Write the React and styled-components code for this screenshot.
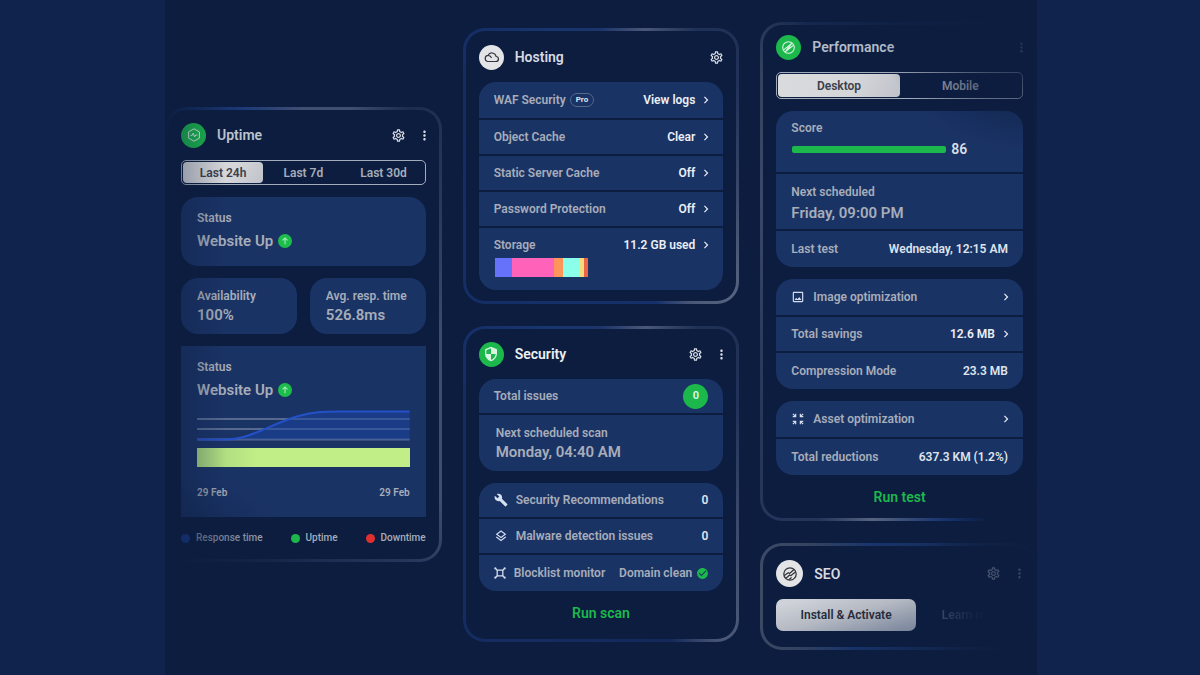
import React from "react";
import styled, { createGlobalStyle } from "styled-components";
import {
  MdBuild,
  MdCheckCircle,
  MdChevronRight,
  MdMoreVert,
  MdOutlineImage,
  MdOutlineLayers,
  MdOutlineSettings,
  MdOutlineZoomInMap,
  MdSecurity,
} from "react-icons/md";

const GlobalStyle = createGlobalStyle`
  * {
    box-sizing: border-box;
  }
  body {
    margin: 0;
    background: #10234c;
    color: #a7adb9;
    font-family: Roboto, "Liberation Sans", sans-serif;
    font-size: 12px;
    font-weight: 600;
    line-height: 14px;
  }
  button {
    padding: 0;
    border: 0;
    background: none;
    color: inherit;
    font: inherit;
    cursor: pointer;
  }
`;

const Stage = styled.main`
  display: grid;
  grid-template-columns: repeat(3, minmax(0, 1fr));
  gap: 21px;
  min-height: 100vh;
  margin: 0 163px 0 165px;
  background: #0c1d40;
`;

const Column = styled.div`
  display: flex;
  flex-direction: column;
  gap: 22px;
  padding-top: ${p => p.$top};
`;

const Card = styled.section`
  position: relative;
  display: flex;
  flex-direction: column;
  gap: 12px;
  padding: ${p => p.$padding};
  border: 3px solid transparent;
  border-radius: 22px;
  background: linear-gradient(#0c1d40, #0c1d40) padding-box,
    ${p => p.$edge} border-box;

  &::after {
    content: "";
    position: absolute;
    inset: -3px;
    background: ${p => p.$fade || "none"};
    pointer-events: none;
  }
`;

const Header = styled.header`
  display: flex;
  align-items: center;
  gap: 11px;
  min-height: 26px;
`;

const Badge = styled.span`
  display: flex;
  align-items: center;
  justify-content: center;
  width: ${p => p.$size || "25px"};
  height: ${p => p.$size || "25px"};
  border-radius: 50%;
  background: ${p => (p.$light ? "#e3e4e6" : "#1cb84c")};
  color: ${p => (p.$light ? "#33363c" : "#d9f5e1")};
`;

const Title = styled.h2`
  flex: 1;
  margin: 0;
  color: ${p => p.$color || "#d5d9e0"};
  font-size: 14px;
  font-weight: 600;
  line-height: 18px;
`;

const Tools = styled.div`
  display: flex;
  gap: 11px;
  color: #d5dae3;
  font-size: 15px;
  margin-right: ${p => (p.$menu ? "-6px" : "-1px")};
`;

const IconButton = styled.button`
  display: flex;
`;

const Tabs = styled.div`
  display: flex;
  height: ${p => p.$height};
  padding: 1px;
  border: 1px solid #a3acbc;
  border-radius: 5px;
`;

const Tab = styled.button`
  flex: 1;
  border-radius: 4px;
  background: ${p =>
    p.$active ? "linear-gradient(120deg, #dadbdd, #d5d6d9 60%, #bfc2ca)" : "none"};
  color: ${p => (p.$active ? "#3c404a" : "#a7adb9")};
`;

const Group = styled.div`
  display: flex;
  flex-direction: column;
  gap: 2px;
  overflow: hidden;
  border-radius: ${p => (p.$square ? "0" : "17px")};
`;

const Row = styled.div`
  display: flex;
  align-items: center;
  gap: 8px;
  min-height: ${p => (p.$tall ? "36px" : "34px")};
  padding: 0 15px;
  background: #1a3365;

  > svg {
    color: #d5dfef;
    font-size: 14px;
  }
`;

const Block = styled.div`
  padding: ${p => p.$padding};
  background: #1a3365;
`;

const Grow = styled.span`
  display: flex;
  flex: 1;
  align-items: center;
  white-space: nowrap;
`;

const Pro = styled.span`
  margin-left: 4px;
  padding: 1px 5px;
  border: 1px solid #56688c;
  border-radius: 8px;
  color: #dfe5ef;
  font-size: 8px;
  font-weight: 700;
  line-height: 10px;
`;

const Value = styled.span`
  color: #dfe4ec;
`;

const LinkValue = styled.button`
  display: flex;
  align-items: center;
  gap: 4px;
  color: #eceff4;

  svg {
    margin-right: -5px;
    font-size: 14px;
  }
`;

const StorageLine = styled.div`
  display: flex;
  align-items: center;
  height: 18px;
`;

const StorageBar = styled.div`
  display: flex;
  width: 93px;
  height: 19px;
  margin-top: 4px;
  margin-left: 1px;
`;

const Segment = styled.span`
  flex: ${p => p.$share};
  background: ${p => p.$color};
`;

const Big = styled.div`
  display: flex;
  align-items: center;
  gap: 5px;
  margin-top: ${p => p.$gap || "3px"};
  font-size: 15px;
  line-height: 18px;
`;

const Count = styled.span`
  display: flex;
  align-items: center;
  justify-content: center;
  width: 25px;
  height: 25px;
  border-radius: 50%;
  background: #1cb84c;
  color: #e5f9eb;
  font-size: 11px;
`;

const Clean = styled.span`
  display: flex;
  align-items: center;
  gap: 4px;
  margin-right: -1px;

  svg {
    color: #1cb84c;
    font-size: 13px;
  }
`;

const RunButton = styled.button`
  align-self: center;
  color: #1cb84c;
  font-size: 14px;
  line-height: 20px;
`;

const Pair = styled.div`
  display: grid;
  grid-template-columns: 1fr 1fr;
  gap: 13px;
`;

const Chart = styled.svg`
  display: block;
  width: 100%;
  height: 36px;
  margin-top: 7px;
`;

const UptimeBar = styled.div`
  height: 19px;
  margin: 6px 0 19px;
  background: linear-gradient(90deg, #a3d07c, #c1ee86 28%);
`;

const Dates = styled.div`
  display: flex;
  justify-content: space-between;
  font-size: 10px;
`;

const Legend = styled.ul`
  display: flex;
  justify-content: space-between;
  margin: 2px 0 0;
  padding: 0;
  list-style: none;
  font-size: 10px;
  font-weight: 500;
`;

const LegendItem = styled.li`
  display: flex;
  align-items: center;
  gap: 6px;

  &::before {
    content: "";
    width: 9px;
    height: 9px;
    border-radius: 50%;
    background: ${p => p.$color};
  }
`;

const ScoreBar = styled.span`
  width: 71%;
  height: 7px;
  margin-left: 1px;
  border-radius: 2px;
  background: #1cb84c;
`;

const ScoreValue = styled.span`
  color: #d9dee7;
  font-size: 14px;
`;

const Actions = styled.div`
  display: flex;
  align-items: center;
  gap: 26px;
`;

const Install = styled.button`
  width: 57%;
  height: 32px;
  border-radius: 7px;
  background: linear-gradient(165deg, #cfd2d8 10%, #b3b8c2 50%, #77839a);
  color: #262c3a;
`;

const Learn = styled.a`
  background: linear-gradient(90deg, #43516c, #0c1d40 80%);
  background-clip: text;
  color: transparent;
  text-decoration: none;
`;

const segments = [
  { id: "files", share: 17, color: "#6772fb" },
  { id: "media", share: 42, color: "#ff62b9" },
  { id: "db", share: 9, color: "#ff955a" },
  { id: "backups", share: 17, color: "#8bffe9" },
  { id: "logs", share: 4, color: "#f3dc7c" },
  { id: "other", share: 4, color: "#ea6547" },
];

const hostingRows = [
  { label: "WAF Security", value: "View logs", pro: true },
  { label: "Object Cache", value: "Clear" },
  { label: "Static Server Cache", value: "Off" },
  { label: "Password Protection", value: "Off" },
];

const UptimeIcon = () => (
  <svg width="14" height="14" viewBox="0 0 14 14" fill="none" stroke="currentColor" strokeLinejoin="round">
    <path d="M7 .8l5.400 3.100v6.200L7 13.200l-5.400-3.100V3.900z" />
    <path d="M3.600 7.400h1.600l1-2.200 1.500 3.600 1-1.800h1.700" />
  </svg>
);

const CloudIcon = () => (
  <svg width="17" height="17" viewBox="0 0 17 17" fill="none" stroke="currentColor" strokeWidth="1.200" strokeLinecap="round">
    <path d="M4.600 12.500h8.200a2.500 2.500 0 0 0 .300-5A4.300 4.300 0 0 0 5 6.400a3.100 3.100 0 0 0-.400 6.100z" />
    <path d="M5 6.500c1.700 0 2.700.7 3.300 2" />
  </svg>
);

const BoltIcon = () => (
  <svg width="15" height="15" viewBox="0 0 15 15" fill="none" stroke="currentColor" strokeWidth="1.100" strokeLinecap="round">
    <circle cx="7.500" cy="7.500" r="5.800" />
    <path d="M3 9.600l7.700-6.200-3 4.200M4.300 11.800l7.500-6M4.300 11.800l3-4.200" strokeLinejoin="round" />
  </svg>
);

const SeoIcon = () => (
  <svg width="16" height="16" viewBox="0 0 16 16" fill="none" stroke="currentColor" strokeWidth="1.300" strokeLinecap="round">
    <circle cx="8" cy="8" r="6.200" />
    <path d="M2.600 9.300l3.600-2.600 1.300.8 4.300-3.700M4.200 12l3.200-2.800 1.300.5 4.700-3.600M7.200 13.500l2-1.700" strokeLinejoin="round" />
  </svg>
);

const FrameIcon = () => (
  <svg width="12" height="12" viewBox="0 0 12 12" fill="none" stroke="currentColor" strokeWidth="1.300">
    <path d="M3 3.200h6M3 8.800h6M3.200 3v6M8.800 3v6M1 1l2 2M11 1L9 3M1 11l2-2M11 11L9 9" />
    <path d="M.4 1.400h1.800M9.800 1.400h1.800M.4 10.600h1.800M9.800 10.600h1.800" strokeWidth="1.600" />
  </svg>
);

const UpIcon = () => (
  <svg width="14" height="14" viewBox="0 0 13 13" fill="none">
    <circle cx="6.500" cy="6.500" r="6.500" fill="#1dbd4b" />
    <path d="M6.500 9.500V4M4.200 6l2.300-2.300L8.800 6" stroke="#a8ecbc" />
  </svg>
);

const CardHeader = ({ icon, title, color, light, size, settings = true, menu = true }) => (
  <Header>
    <Badge $light={light} $size={size}>
      {icon}
    </Badge>
    <Title $color={color}>{title}</Title>
    <Tools $menu={menu}>
      {settings && (
        <IconButton aria-label="Settings">
          <MdOutlineSettings />
        </IconButton>
      )}
      {menu && (
        <IconButton aria-label="More">
          <MdMoreVert />
        </IconButton>
      )}
    </Tools>
  </Header>
);

const Uptime = () => (
  <Card
    $padding="12px 13px 14px"
    $edge="conic-gradient(#3f4f72 0deg, #3f4f72 12deg, #1a2c50 25deg, #26365a 40deg, #3d4c6c 90deg, #3f4e6e 140deg, #24365c 155deg, #14264a 190deg, #0c1d40 215deg, #0c1d40 325deg, #1c3a78 345deg, #3f4f72 360deg)"
    $fade="linear-gradient(90deg, rgba(12, 29, 64, 0.45), rgba(12, 29, 64, 0) 22%), radial-gradient(130px 90px at 0 100%, rgba(12, 29, 64, 0.65), rgba(12, 29, 64, 0))"
  >
    <CardHeader icon={<UptimeIcon />} title="Uptime" color="#bcc3cf" />
    <Tabs $height="25px">
      <Tab $active aria-pressed="true">Last 24h</Tab>
      <Tab aria-pressed="false">Last 7d</Tab>
      <Tab aria-pressed="false">Last 30d</Tab>
    </Tabs>
    <Group>
      <Block $padding="14px 16px 16px">
        Status
        <Big $gap="7px">
          Website Up <UpIcon />
        </Big>
      </Block>
    </Group>
    <Pair>
      <Group>
        <Block $padding="11px 16px 10px">
          Availability
          <Big>100%</Big>
        </Block>
      </Group>
      <Group>
        <Block $padding="11px 0 10px 16px">
          Avg. resp. time
          <Big>526.8ms</Big>
        </Block>
      </Group>
    </Pair>
    <Group $square>
      <Block $padding="14px 16px 17px">
        Status
        <Big $gap="7px">
          Website Up <UpIcon />
        </Big>
        <Chart viewBox="0 0 213 36" preserveAspectRatio="none" fill="none">
          <path d="M0 13h213M0 23h213M0 33.500h213" stroke="#56698f" strokeWidth="2" />
          <path d="M0 33.500h28c25 0 45-15 72-23 16-4.500 25-5 43-5h70v28z" fill="#1a46a8" fillOpacity="0.500" />
          <path d="M0 33.500h28c25 0 45-15 72-23 16-4.500 25-5 43-5h70" stroke="#2450c8" strokeWidth="2" />
        </Chart>
        <UptimeBar />
        <Dates>
          <span>29 Feb</span>
          <span>29 Feb</span>
        </Dates>
      </Block>
    </Group>
    <Legend>
      <LegendItem $color="#2045a8">Response time</LegendItem>
      <LegendItem $color="#1cb84c">Uptime</LegendItem>
      <LegendItem $color="#e02f2f">Downtime</LegendItem>
    </Legend>
  </Card>
);

const Hosting = () => (
  <Card
    $padding="13px 13px 11px"
    $edge="conic-gradient(#1c356a 0deg, #4a5878 18deg, #1e3156 35deg, #22325a 60deg, #38476a 100deg, #56637f 135deg, #4b5977 146deg, #15306a 158deg, #142c60 300deg, #17356f 340deg, #1c356a 360deg)"
  >
    <CardHeader icon={<CloudIcon />} title="Hosting" light menu={false} />
    <Group>
      {hostingRows.map((row, i) => (
        <Row key={row.label} $tall={i === 0}>
          <Grow>
            {row.label}
            {row.pro && <Pro>Pro</Pro>}
          </Grow>
          <LinkValue>
            {row.value} <MdChevronRight />
          </LinkValue>
        </Row>
      ))}
      <Block $padding="8px 15px 13px">
        <StorageLine>
          <Grow>Storage</Grow>
          <LinkValue>
            11.2 GB used <MdChevronRight />
          </LinkValue>
        </StorageLine>
        <StorageBar>
          {segments.map(segment => (
            <Segment key={segment.id} $share={segment.share} $color={segment.color} />
          ))}
        </StorageBar>
      </Block>
    </Group>
  </Card>
);

const Security = () => (
  <Card
    $padding="12px 13px 16px"
    $edge="conic-gradient(#1c356a 0deg, #4a5878 16deg, #1e3156 32deg, #22325a 60deg, #38476a 100deg, #4b5977 142deg, #14295a 156deg, #142c60 200deg, #142c60 300deg, #17356f 340deg, #1c356a 360deg)"
  >
    <CardHeader icon={<MdSecurity size={16} />} title="Security" color="#eef0f4" />
    <Group>
      <Row>
        <Grow>Total issues</Grow>
        <Count>0</Count>
      </Row>
      <Block $padding="11px 17px 10px">
        Next scheduled scan
        <Big>Monday, 04:40 AM</Big>
      </Block>
    </Group>
    <Group>
      <Row>
        <MdBuild />
        <Grow>Security Recommendations</Grow>
        <Value>0</Value>
      </Row>
      <Row>
        <MdOutlineLayers />
        <Grow>Malware detection issues</Grow>
        <Value>0</Value>
      </Row>
      <Row $tall>
        <FrameIcon />
        <Grow>Blocklist monitor</Grow>
        <Clean>
          Domain clean <MdCheckCircle />
        </Clean>
      </Row>
    </Group>
    <RunButton>Run scan</RunButton>
  </Card>
);

const Performance = () => (
  <Card
    $padding="9px 11px 11px 13px"
    $edge="conic-gradient(#0e2146 0deg, #0c1d40 160deg, #17356f 170deg, #566480 186deg, #22345a 198deg, #24365a 212deg, #2b3b5c 240deg, #3a4968 300deg, #33435f 325deg, #14284f 340deg, #0e2146 360deg)"
    $fade="radial-gradient(160px 130px at 100% 0, #0c1d40 5%, rgba(12, 29, 64, 0.7) 45%, rgba(12, 29, 64, 0))"
  >
    <CardHeader icon={<BoltIcon />} title="Performance" color="#b4bbc8" settings={false} />
    <Tabs $height="27px">
      <Tab $active aria-pressed="true">Desktop</Tab>
      <Tab aria-pressed="false">Mobile</Tab>
    </Tabs>
    <Group>
      <Block $padding="10px 15px 14px">
        Score
        <Big $gap="5px">
          <ScoreBar />
          <ScoreValue>86</ScoreValue>
        </Big>
      </Block>
      <Block $padding="11px 15px 7px">
        Next scheduled
        <Big $gap="5px">Friday, 09:00 PM</Big>
      </Block>
      <Row $tall>
        <Grow>Last test</Grow>
        <Value>Wednesday, 12:15 AM</Value>
      </Row>
    </Group>
    <Group>
      <Row $tall>
        <MdOutlineImage />
        <Grow>Image optimization</Grow>
        <LinkValue aria-label="Image optimization">
          <MdChevronRight />
        </LinkValue>
      </Row>
      <Row>
        <Grow>Total savings</Grow>
        <LinkValue>
          12.6 MB <MdChevronRight />
        </LinkValue>
      </Row>
      <Row $tall>
        <Grow>Compression Mode</Grow>
        <Value>23.3 MB</Value>
      </Row>
    </Group>
    <Group>
      <Row $tall>
        <MdOutlineZoomInMap />
        <Grow>Asset optimization</Grow>
        <LinkValue aria-label="Asset optimization">
          <MdChevronRight />
        </LinkValue>
      </Row>
      <Row $tall>
        <Grow>Total reductions</Grow>
        <Value>637.3 KM (1.2%)</Value>
      </Row>
    </Group>
    <RunButton>Run test</RunButton>
  </Card>
);

const Seo = () => (
  <Card
    $padding="14px 13px 16px"
    $edge="linear-gradient(100deg, #3d4b67, #34435f 18%, #17356c 38%, #14284f 80%, #0e2146)"
    $fade="linear-gradient(90deg, rgba(12, 29, 64, 0) 60%, rgba(12, 29, 64, 0.7) 82%, rgba(12, 29, 64, 0.85)), linear-gradient(170deg, rgba(12, 29, 64, 0) 75%, rgba(12, 29, 64, 0.7))"
  >
    <CardHeader icon={<SeoIcon />} title="SEO" light size="27px" />
    <Actions>
      <Install>Install &amp; Activate</Install>
      <Learn href="#seo">Learn more</Learn>
    </Actions>
  </Card>
);

const App = () => (
  <>
    <GlobalStyle />
    <Stage>
      <Column $top="107px">
        <Uptime />
      </Column>
      <Column $top="28px">
        <Hosting />
        <Security />
      </Column>
      <Column $top="22px">
        <Performance />
        <Seo />
      </Column>
    </Stage>
  </>
);

export default App;
